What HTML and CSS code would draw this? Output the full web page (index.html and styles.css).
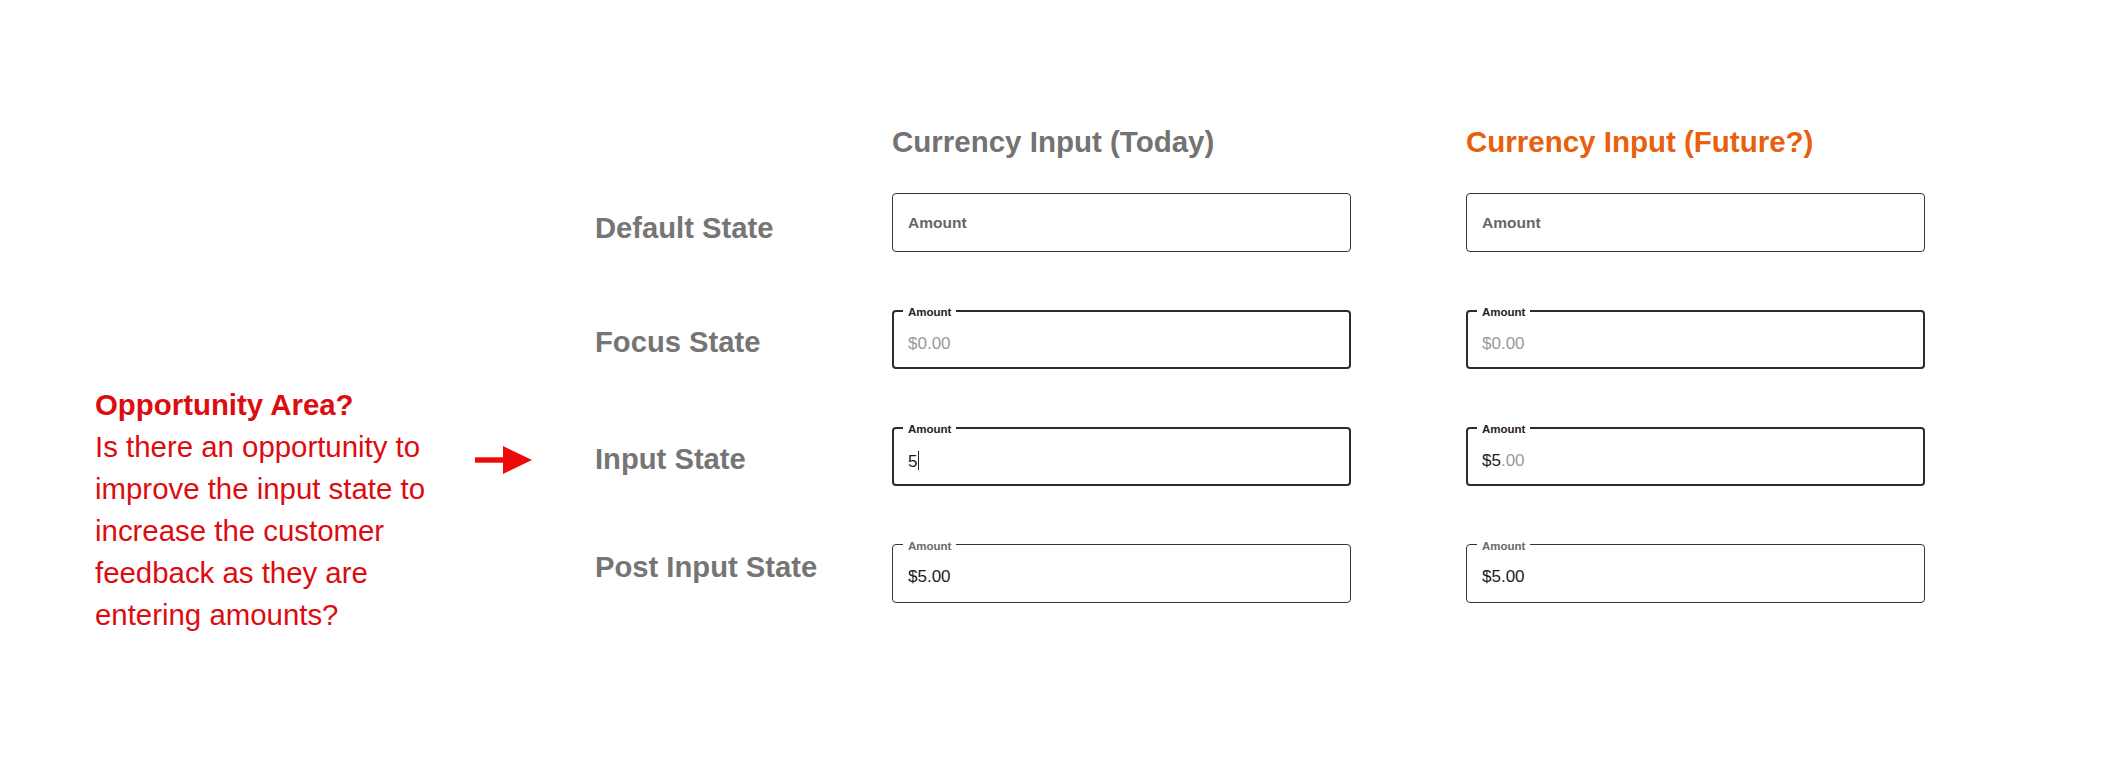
FILE: index.html
```html
<!DOCTYPE html>
<html lang="en">
<head>
<meta charset="utf-8">
<title>Currency Input States</title>
<link rel="stylesheet" href="styles.css">
</head>
<body>
<main class="page">
  <section class="note">
    <p class="note-title">Opportunity Area?</p>
    <p class="note-body">Is there an opportunity to<br>improve the input state to<br>increase the customer<br>feedback as they are<br>entering amounts?</p>
  </section>
  <svg class="arrow" viewBox="0 0 57 28" aria-hidden="true">
    <rect x="0" y="11.3" width="29" height="5.4" fill="#ec0a0a"/>
    <polygon points="28,0 57,14 28,28" fill="#ec0a0a"/>
  </svg>
  <section class="matrix">
    <div class="grid grid-head">
      <div class="spacer"></div>
      <h2 class="col-title">Currency Input (Today)</h2>
      <h2 class="col-title col-title--future col-future">Currency Input (Future?)</h2>
    </div>
    <div class="grid grid-body">
      <div class="state state--low">Default State</div>
      <div class="field field--default"><span class="field-hint">Amount</span></div>
      <div class="field field--default col-future"><span class="field-hint">Amount</span></div>

      <div class="state">Focus State</div>
      <div class="field field--active"><span class="field-label">Amount</span><span class="field-value placeholder">$0.00</span></div>
      <div class="field field--active col-future"><span class="field-label">Amount</span><span class="field-value placeholder">$0.00</span></div>

      <div class="state">Input State</div>
      <div class="field field--active"><span class="field-label">Amount</span><span class="field-value">5<span class="caret"></span></span></div>
      <div class="field field--active col-future"><span class="field-label">Amount</span><span class="field-value">$5<span class="placeholder">.00</span></span></div>

      <div class="state state--high">Post Input State</div>
      <div class="field field--filled"><span class="field-label field-label--muted">Amount</span><span class="field-value">$5.00</span></div>
      <div class="field field--filled col-future"><span class="field-label field-label--muted">Amount</span><span class="field-value">$5.00</span></div>
    </div>
  </section>
</main>
</body>
</html>
```

FILE: styles.css
```css
html, body {
  margin: 0;
  padding: 0;
  background: #ffffff;
}

body {
  font-family: "Liberation Sans", Arial, Helvetica, sans-serif;
}

.page {
  display: flex;
  align-items: flex-start;
  width: 2116px;
  height: 761px;
  box-sizing: border-box;
  padding-left: 95px;
  overflow: hidden;
}

/* Left annotation */
.note {
  flex: none;
  width: 380px;
  margin-top: 384px;
  color: #dc0c10;
  font-size: 29.4px;
  line-height: 42px;
}

.note p {
  margin: 0;
}

.note-title {
  font-weight: 700;
}

.arrow {
  flex: none;
  width: 57px;
  height: 28px;
  margin-top: 446px;
  margin-right: 63px;
}

/* Matrix of states */
.matrix {
  flex: none;
  margin-top: 125px;
}

.grid {
  display: grid;
  grid-template-columns: 297px 459px 115px 459px;
}

.col-future {
  grid-column: 4;
}

.grid-head {
  margin-bottom: 34px;
}

.grid-body {
  row-gap: 58px;
}

.col-title {
  margin: 0;
  font-size: 29.5px;
  line-height: 34px;
  font-weight: 700;
  color: #737373;
  white-space: nowrap;
}

.col-title--future {
  color: #e8600c;
}

.state {
  font-size: 29.2px;
  line-height: 34px;
  font-weight: 700;
  color: #757575;
  padding-top: 15px;
  white-space: nowrap;
}

.state--low {
  padding-top: 18px;
}

.state--high {
  padding-top: 6px;
}

/* Fields */
.field {
  position: relative;
  height: 59px;
  box-sizing: border-box;
  border: 1px solid #363636;
  border-radius: 4px;
  padding: 0 15px;
  display: flex;
  align-items: flex-start;
  background: #ffffff;
}

.field--default {
  align-items: center;
}

.field--active {
  border: 2px solid #2c2c2c;
  padding: 0 14px;
}

.field-hint {
  font-size: 15.5px;
  line-height: 18px;
  font-weight: 700;
  color: #666666;
}

.field-label {
  position: absolute;
  left: 9px;
  top: -6px;
  padding: 0 5px;
  background: #ffffff;
  font-size: 11.5px;
  line-height: 12px;
  font-weight: 700;
  color: #222222;
}

.field-label--muted {
  left: 10px;
  top: -5px;
  color: #6a6a6a;
}

.field-value {
  padding-top: 22px;
  font-size: 17px;
  line-height: 20px;
  color: #1a1a1a;
  white-space: nowrap;
}

.placeholder {
  color: #9a9a9a;
}

.caret {
  display: inline-block;
  width: 1px;
  height: 19px;
  margin-left: 1px;
  vertical-align: -3px;
  background: #222222;
}
```
